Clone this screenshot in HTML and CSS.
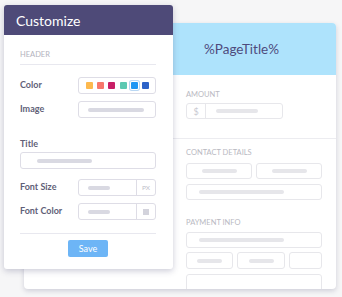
FILE: index.html
```html
<!DOCTYPE html>
<html lang="en">
<head>
    <meta charset="UTF-8">
    <meta name="viewport" content="width=device-width, initial-scale=1.0">
    <title>Customize</title>
    <link rel="stylesheet" href="styles.css">
</head>
<body>
    <div class="stage">

        <!-- page preview behind the panel -->
        <div class="page-card">
            <div class="page-head">
                <span class="page-title">%PageTitle%</span>
            </div>
            <div class="section first">
                <div class="caption">AMOUNT</div>
                <div class="field amount">
                    <span class="prefix">$</span>
                    <span class="bar amount-bar"></span>
                </div>
            </div>
            <div class="section">
                <div class="caption">CONTACT DETAILS</div>
                <div class="row two">
                    <div class="field centered"><span class="bar short"></span></div>
                    <div class="field centered"><span class="bar short"></span></div>
                </div>
                <div class="field padded"><span class="bar wide"></span></div>
            </div>
            <div class="section last">
                <div class="caption">PAYMENT INFO</div>
                <div class="field padded"><span class="bar wide"></span></div>
                <div class="row three">
                    <div class="field centered"><span class="bar tiny"></span></div>
                    <div class="field centered"><span class="bar tiny"></span></div>
                    <div class="field"></div>
                </div>
                <div class="field tall"></div>
            </div>
        </div>

        <!-- customize panel -->
        <div class="panel">
            <div class="panel-head">Customize</div>
            <div class="panel-body">
                <div class="group-title">HEADER</div>

                <div class="opt-row color-row">
                    <span class="opt-label">Color</span>
                    <div class="box swatches">
                        <span class="swatch" style="background:#fdb94e"></span>
                        <span class="swatch" style="background:#f7776b"></span>
                        <span class="swatch" style="background:#c81f66"></span>
                        <span class="swatch" style="background:#5cc8b2"></span>
                        <span class="swatch selected" style="background:#1e96f3"></span>
                        <span class="swatch" style="background:#2d63c8"></span>
                    </div>
                </div>

                <div class="opt-row image-row">
                    <span class="opt-label">Image</span>
                    <div class="box"><span class="pbar image-bar"></span></div>
                </div>

                <div class="title-block">
                    <div class="opt-label">Title</div>
                    <div class="box full"><span class="pbar title-bar"></span></div>
                </div>

                <div class="opt-row size-row">
                    <span class="opt-label">Font Size</span>
                    <div class="box split">
                        <span class="split-main"><span class="pbar small-bar"></span></span>
                        <span class="suffix">PX</span>
                    </div>
                </div>

                <div class="opt-row fcolor-row">
                    <span class="opt-label">Font Color</span>
                    <div class="box split">
                        <span class="split-main"><span class="pbar small-bar"></span></span>
                        <span class="suffix"><span class="chip"></span></span>
                    </div>
                </div>

                <div class="panel-foot">
                    <button type="button" class="save-btn">Save</button>
                </div>
            </div>
        </div>

    </div>
</body>
</html>
```

FILE: styles.css
```css
body {
    margin: 0;
    background: #f6f6f7;
    font-family: 'Lato', 'Open Sans', sans-serif;
}

.stage {
    position: relative;
    width: 342px;
    height: 297px;
    overflow: hidden;
}

/* ---- page preview card ---- */

.page-card {
    margin: 23px 0 0 24px;
    width: 312px;
    height: 266px;
    background: #fff;
    border-radius: 4px;
    overflow: hidden;
    box-shadow: 0 2px 5px rgba(70, 68, 110, 0.22);
}

.page-head {
    height: 52px;
    background: #aee3fc;
    display: flex;
    align-items: center;
    padding-left: 180px;
}

.page-title {
    font-size: 13.5px;
    color: #4f4b7c;
}

.section {
    padding: 9px 14px 18px 162px;
}

.section.first {
    padding-top: 15px;
    padding-bottom: 19px;
    border-bottom: 1px solid #ececf0;
}

.section.last {
    padding-top: 0;
}

.caption {
    font-size: 7.5px;
    line-height: 10px;
    color: #b9b9c2;
    margin-bottom: 5px;
}

.section.first .caption {
    margin-bottom: 3px;
}

.section.last .caption {
    margin-bottom: 4px;
}

.field {
    box-sizing: border-box;
    height: 16px;
    border: 1px solid #e7e7eb;
    border-radius: 3px;
    display: flex;
    align-items: center;
    margin-bottom: 5px;
}

.section > .field:last-child {
    margin-bottom: 0;
}

.section.last > .field {
    margin-bottom: 4px;
}

.field.tall {
    height: 30px;
}

.field.centered {
    justify-content: center;
}

.field.padded {
    padding-left: 12px;
}

.row {
    display: grid;
    gap: 4px;
}

.row .field {
    margin-bottom: 0;
}

.row.two {
    grid-template-columns: 1fr 1fr;
    margin-bottom: 5px;
}

.row.three {
    grid-template-columns: 47px 48px 1fr;
    height: 17px;
    margin-bottom: 5px;
}

.row.three .field {
    height: 17px;
}

.field.amount {
    width: 97px;
}

.prefix {
    width: 18px;
    height: 100%;
    border-right: 1px solid #e7e7eb;
    display: flex;
    align-items: center;
    justify-content: center;
    font-size: 9px;
    color: #c9c9d1;
}

.bar {
    height: 4px;
    border-radius: 2px;
    background: #e6e6ea;
}

.amount-bar {
    width: 42px;
    margin-left: 10px;
}

.bar.short {
    width: 35px;
}

.bar.wide {
    width: 85px;
}

.bar.tiny {
    width: 25px;
}

/* ---- customize panel ---- */

.panel {
    position: absolute;
    left: 4px;
    top: 5px;
    width: 169px;
    height: 264px;
    background: #fff;
    border-radius: 3px;
    overflow: hidden;
    box-shadow: 0 2px 6px rgba(70, 68, 110, 0.28);
}

.panel-head {
    height: 30px;
    background: #4e4a78;
    color: #fff;
    font-size: 14px;
    display: flex;
    align-items: center;
    padding: 1px 0 0 12px;
    box-sizing: border-box;
}

.panel-body {
    padding: 0 17px 0 16px;
}

.group-title {
    margin-top: 15px;
    font-size: 7.5px;
    line-height: 10px;
    color: #b3b3bd;
    padding-bottom: 4px;
    border-bottom: 1px solid #e8e8ef;
}

.opt-row {
    display: flex;
    align-items: center;
}

.opt-label {
    font-size: 9px;
    font-weight: bold;
    line-height: 11px;
    color: #615f78;
}

.opt-row .opt-label {
    width: 58px;
    padding-bottom: 3px;
}

.color-row {
    margin-top: 12px;
}

.image-row {
    margin-top: 7px;
}

.size-row {
    margin-top: 10px;
}

.fcolor-row {
    margin-top: 7px;
}

.box {
    box-sizing: border-box;
    width: 78px;
    height: 17px;
    border: 1px solid #dedde6;
    border-radius: 3px;
    display: flex;
    align-items: center;
    padding-left: 9px;
}

.box.full {
    width: auto;
    padding-left: 16px;
}

.swatches {
    justify-content: space-between;
    padding: 0 6px 0 7px;
}

.swatch {
    width: 7px;
    height: 7px;
    border-radius: 1px;
}

.swatch.selected {
    box-shadow: 0 0 0 1px #fff, 0 0 0 2px #b9d7f3;
}

.pbar {
    height: 4px;
    border-radius: 2px;
    background: #d9d9e2;
}

.image-bar {
    width: 56px;
}

.title-block {
    margin-top: 20px;
}

.title-block .opt-label {
    margin-bottom: 3px;
}

.title-bar {
    width: 55px;
}

.box.split {
    padding-left: 0;
}

.split-main {
    flex: 1;
    display: flex;
    align-items: center;
    padding-left: 9px;
}

.small-bar {
    width: 22px;
}

.suffix {
    width: 18px;
    height: 100%;
    border-left: 1px solid #dedde6;
    display: flex;
    align-items: center;
    justify-content: center;
    font-size: 6.5px;
    color: #c0c0ca;
}

.chip {
    width: 6px;
    height: 6px;
    background: #d3d3dc;
}

.panel-foot {
    margin-top: 13px;
    border-top: 1px solid #e8e8ef;
    padding-top: 6px;
    display: flex;
    justify-content: center;
}

.save-btn {
    width: 40px;
    height: 17px;
    padding: 0;
    border: none;
    border-radius: 2px;
    background: #6db5f6;
    color: #fff;
    font-family: 'Lato', 'Open Sans', sans-serif;
    font-size: 9px;
}
```
